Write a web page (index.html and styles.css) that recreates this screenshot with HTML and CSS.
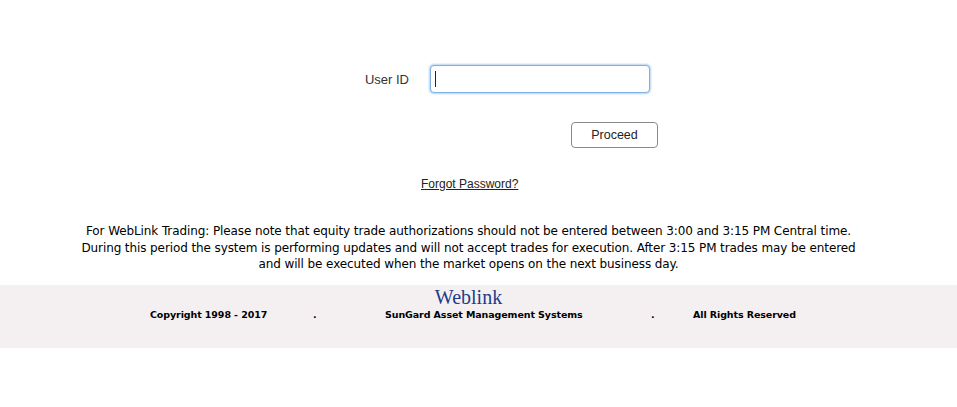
FILE: index.html
```html
<!DOCTYPE html>
<html>
<head>
<meta charset="utf-8">
<link rel="stylesheet" href="styles.css">
</head>
<body>
<div class="login">
  <div class="row-user">
    <label class="lbl" for="uid">User ID</label>
    <span class="fieldwrap">
      <input class="field" id="uid" type="text">
      <span class="caret"></span>
    </span>
  </div>
  <div class="row-btn">
    <button class="btn">Proceed</button>
  </div>
  <div class="row-link">
    <a class="forgot" href="#">Forgot Password?</a>
  </div>
</div>
<div class="notice">
  For WebLink Trading: Please note that equity trade authorizations should not be entered between 3:00 and 3:15 PM Central time.<br>
  During this period the system is performing updates and will not accept trades for execution. After 3:15 PM trades may be entered<br>
  and will be executed when the market opens on the next business day.
</div>
<div class="footer">
  <div class="brand">Weblink</div>
  <div class="frow">
    <span class="c1">Copyright 1998 - 2017</span>
    <span class="c2">.</span>
    <span class="c3">SunGard Asset Management Systems</span>
    <span class="c4">.</span>
    <span class="c5">All Rights Reserved</span>
  </div>
</div>
</body>
</html>
```
FILE: styles.css
```css
html, body { margin: 0; padding: 0; background: #fff; }
body { font-family: "Liberation Sans", Arial, sans-serif; color: #222; }

.login { width: 957px; padding-top: 65px; }
.row-user { display: flex; align-items: center; height: 28px; }
.lbl { width: 409px; text-align: right; font-size: 13px; color: #333; margin-right: 21px; }
.fieldwrap { position: relative; display: block; width: 220px; height: 28px; }
.field {
  box-sizing: border-box; width: 220px; height: 28px; padding: 0 4px;
  border: 1px solid #7fb1e3; border-radius: 4px;
  box-shadow: 0 0 2px 1px rgba(120,170,230,0.55);
  outline: none; background: #fff; font-size: 14px;
}
.caret { position: absolute; left: 5px; top: 6px; width: 1px; height: 16px; background: #222; }
.row-btn { display: flex; padding-top: 29px; padding-left: 571px; }
.btn {
  box-sizing: border-box; width: 87px; height: 26px;
  border: 1px solid #8a8a8a; border-radius: 4px; background: #fff;
  font-family: "Liberation Sans", Arial, sans-serif; font-size: 12.5px; color: #222; padding: 0;
}
.row-link { padding-top: 26px; padding-left: 421px; }
.forgot { font-size: 12px; color: #222; text-decoration: underline; }

.notice {
  width: 937px; margin-top: 31px; text-align: center;
  font-family: "DejaVu Sans", Verdana, sans-serif; font-size: 12px; line-height: 16.5px; color: #000;
  letter-spacing: -0.1px;
}
.footer { margin-top: 12px; background: #f4f0f1; height: 63px; box-sizing: border-box; padding-top: 3px; }
.brand {
  width: 937px; text-align: center; font-family: "Liberation Serif", "Times New Roman", serif;
  font-size: 20px; color: #1f3b8c; line-height: 19px;
}
.frow { display: flex; font-family: "DejaVu Sans", Verdana, sans-serif; font-weight: bold; font-size: 9.5px; letter-spacing: -0.1px; color: #000; padding-top: 2px; }
.frow span { display: block; }
.c1 { margin-left: 150px; width: 163px; }
.c2 { width: 72px; }
.c3 { width: 266px; }
.c4 { width: 42px; }
.c5 { }
```
